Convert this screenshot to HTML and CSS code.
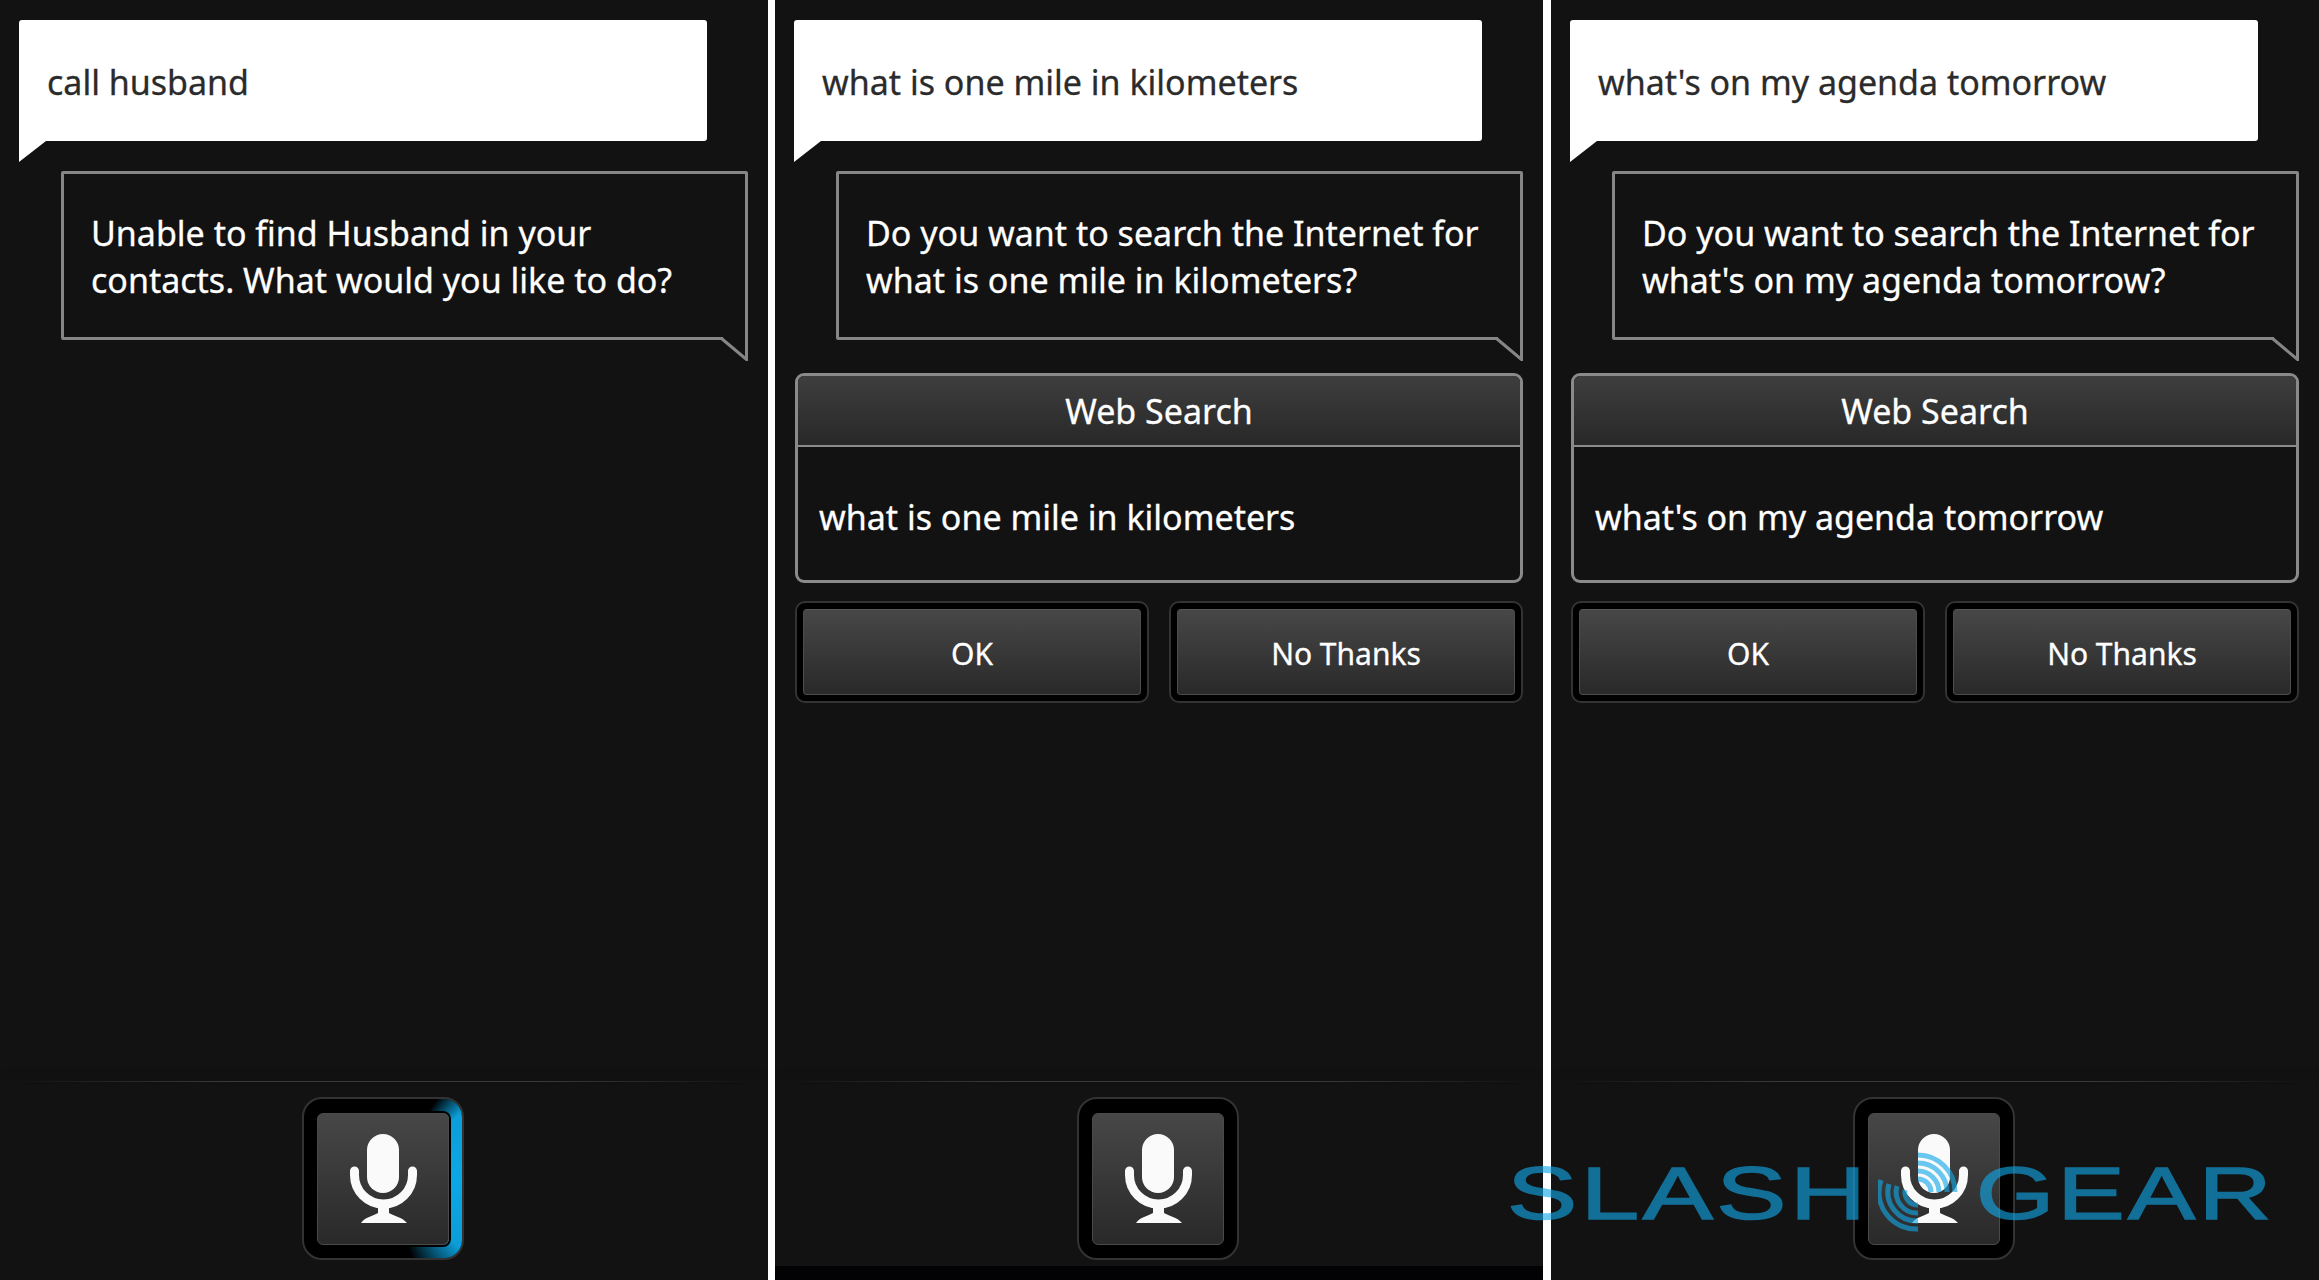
FILE: index.html
```html
<!DOCTYPE html>
<html lang="en">
<head>
<meta charset="utf-8">
<title>Voice assistant</title>
<link rel="stylesheet" href="styles.css">
</head>
<body>
<main class="screens">
  <section class="panel">
    <div class="query"><span>call husband</span></div>
    <div class="reply">
      <p>Unable to find Husband in your<br>contacts. What would you like to do?</p>
      <svg class="reply-tail" viewBox="0 0 30 24"><rect class="tail-gap" x="5" y="0" width="22" height="3"/><path d="M3.5 1.5L28.5 22.5V0"/></svg>
    </div>
    <div class="footer">
      <div class="rule"></div>
      <div class="mic mic-active">
        <div class="mic-face">
          <svg viewBox="0 0 132 132"><rect x="50" y="21" width="32" height="59" rx="16"/><path class="mic-arc" d="M37.5 58V62a29 29 0 0 0 58 0V58"/><path d="M44 110C48 104 56 103 61 100V92H72V100C77 103 85 104 90 110Z"/></svg>
        </div>
      </div>
    </div>
    <div class="bar"></div>
  </section>
  <section class="panel">
    <div class="query"><span>what is one mile in kilometers</span></div>
    <div class="reply">
      <p>Do you want to search the Internet for<br>what is one mile in kilometers?</p>
      <svg class="reply-tail" viewBox="0 0 30 24"><rect class="tail-gap" x="5" y="0" width="22" height="3"/><path d="M3.5 1.5L28.5 22.5V0"/></svg>
    </div>
    <div class="card">
      <div class="card-head">Web Search</div>
      <div class="card-body">what is one mile in kilometers</div>
    </div>
    <div class="actions">
      <div class="btn"><div class="btn-face">OK</div></div>
      <div class="btn"><div class="btn-face">No Thanks</div></div>
    </div>
    <div class="footer">
      <div class="rule"></div>
      <div class="mic">
        <div class="mic-face">
          <svg viewBox="0 0 132 132"><rect x="50" y="21" width="32" height="59" rx="16"/><path class="mic-arc" d="M37.5 58V62a29 29 0 0 0 58 0V58"/><path d="M44 110C48 104 56 103 61 100V92H72V100C77 103 85 104 90 110Z"/></svg>
        </div>
      </div>
    </div>
    <div class="bar bar-dark"></div>
  </section>
  <section class="panel">
    <div class="query"><span>what's on my agenda tomorrow</span></div>
    <div class="reply">
      <p>Do you want to search the Internet for<br>what's on my agenda tomorrow?</p>
      <svg class="reply-tail" viewBox="0 0 30 24"><rect class="tail-gap" x="5" y="0" width="22" height="3"/><path d="M3.5 1.5L28.5 22.5V0"/></svg>
    </div>
    <div class="card">
      <div class="card-head">Web Search</div>
      <div class="card-body">what's on my agenda tomorrow</div>
    </div>
    <div class="actions">
      <div class="btn"><div class="btn-face">OK</div></div>
      <div class="btn"><div class="btn-face">No Thanks</div></div>
    </div>
    <div class="footer">
      <div class="rule"></div>
      <div class="mic">
        <div class="mic-face">
          <svg viewBox="0 0 132 132"><rect x="50" y="21" width="32" height="59" rx="16"/><path class="mic-arc" d="M37.5 58V62a29 29 0 0 0 58 0V58"/><path d="M44 110C48 104 56 103 61 100V92H72V100C77 103 85 104 90 110Z"/></svg>
        </div>
      </div>
    </div>
    <div class="bar"></div>
  </section>
</main>
<div class="watermark">
  <span class="wm-left">SLASH</span>
  <svg class="wm-swirl" viewBox="0 0 80 80">
    <path d="M3 28A37 37 0 0 0 40 77"/>
    <path d="M11 32A29 29 0 0 0 40 69"/>
    <path d="M19 34A21 21 0 0 0 40 61"/>
    <path d="M27 38A13 13 0 0 0 40 53"/>
    <path d="M40 3A37 37 0 0 1 77 40"/>
    <path d="M40 11A29 29 0 0 1 69 40"/>
    <path d="M40 19A21 21 0 0 1 61 40"/>
    <path d="M40 27A13 13 0 0 1 53 40"/>
  </svg>
  <span class="wm-right">GEAR</span>
</div>
</body>
</html>
```

FILE: styles.css
```css
* { box-sizing: border-box; }
html, body { margin: 0; padding: 0; }
body {
  position: relative;
  width: 2319px;
  height: 1280px;
  overflow: hidden;
  background: #fff;
  font-family: "Noto Sans", "Open Sans", sans-serif;
}
.screens {
  display: grid;
  grid-template-columns: 775px 776px 768px;
  height: 1280px;
}
.panel {
  display: flex;
  flex-direction: column;
  width: 768px;
  height: 1280px;
  background: #121212;
  overflow: hidden;
  -webkit-text-stroke: .3px currentColor;
}
.query {
  position: relative;
  flex: none;
  display: flex;
  align-items: center;
  width: 688px;
  height: 121px;
  margin: 20px 0 0 19px;
  padding: 3px 0 0 28px;
  background: #fff;
  border-radius: 3px 3px 3px 0;
  color: #2b2b2b;
  font-size: 34px;
}
.query::after {
  content: "";
  position: absolute;
  left: 0;
  top: 100%;
  width: 27px;
  height: 21px;
  background: #fff;
  clip-path: polygon(0 0, 100% 0, 0 100%);
}
.reply {
  position: relative;
  flex: none;
  width: 687px;
  height: 169px;
  margin: 30px 0 0 61px;
  padding: 0 0 0 27px;
  display: flex;
  align-items: center;
  border: 3px solid #868686;
  border-radius: 2px;
  color: #fff;
  font-size: 34px;
  line-height: 47px;
}
.reply p { margin: 3px 0 0; }
.reply-tail {
  position: absolute;
  right: -3px;
  top: 100%;
  width: 30px;
  height: 24px;
  fill: none;
  stroke: #868686;
  stroke-width: 3;
}
.reply-tail .tail-gap { fill: #121212; stroke: none; }
.card {
  flex: none;
  width: 728px;
  height: 210px;
  margin: 33px 0 0 20px;
  border: 3px solid #8a8a8a;
  border-radius: 9px;
  overflow: hidden;
  color: #fff;
  font-size: 34px;
}
.card-head {
  height: 71px;
  display: flex;
  align-items: center;
  justify-content: center;
  background: linear-gradient(#3e3e3e, #282828);
  border-bottom: 2px solid #8a8a8a;
}
.card-body {
  height: 134px;
  display: flex;
  align-items: center;
  padding: 6px 0 0 21px;
}
.actions {
  flex: none;
  display: flex;
  gap: 20px;
  width: 728px;
  height: 102px;
  margin: 18px 0 0 20px;
}
.btn {
  flex: 1;
  padding: 6px;
  background: #000;
  border: 2px solid #333;
  border-radius: 10px;
}
.btn-face {
  height: 100%;
  display: flex;
  align-items: center;
  justify-content: center;
  padding-top: 2px;
  background: linear-gradient(#474747, #292929);
  border: 1px solid #4c4c4c;
  border-top-color: #555;
  border-radius: 4px;
  color: #fff;
  font-size: 30px;
}
.footer {
  flex: none;
  display: flex;
  flex-direction: column;
  align-items: center;
  margin-top: auto;
  height: 185px;
}
.rule {
  flex: none;
  width: 100%;
  height: 1px;
  margin-bottom: 15px;
  background: linear-gradient(90deg, #121212 2%, #3a3a3a 30%, #3a3a3a 70%, #121212 98%);
  box-shadow: 0 -6px 8px rgba(0, 0, 0, .25);
}
.bar { flex: none; height: 14px; }
.bar-dark { background: #020204; }
.mic {
  position: relative;
  flex: none;
  width: 162px;
  height: 163px;
  margin-right: 2px;
  padding: 14px 13px;
  background: #000;
  border: 2px solid #333;
  border-radius: 20px;
}
.mic-active::before {
  content: "";
  position: absolute;
  inset: 0;
  border-radius: 18px;
  background: conic-gradient(from 0deg, transparent 34deg, #0b9ed9 50deg, #0ba8e6 90deg, #0b9ed9 132deg, transparent 160deg);
}
.mic-face {
  position: relative;
  width: 132px;
  height: 132px;
  background: linear-gradient(#474747, #292929);
  border: 1px solid #4a4a4a;
  border-radius: 6px;
}
.mic-active .mic-face { box-shadow: 0 0 0 2px #000; }
.mic-face svg {
  display: block;
  position: absolute;
  left: -1px;
  top: -1px;
  width: 132px;
  height: 132px;
  fill: #fafafa;
}
.mic-face .mic-arc {
  fill: none;
  stroke: #fafafa;
  stroke-width: 9;
  stroke-linecap: round;
}
.watermark {
  position: absolute;
  left: 1507px;
  top: 1166px;
  width: 765px;
  height: 55px;
  display: flex;
  justify-content: space-between;
  align-items: center;
  color: rgb(18, 169, 233);
  font-family: "Liberation Sans", sans-serif;
  font-size: 74px;
  line-height: 55px;
  letter-spacing: 2.5px;
  -webkit-text-stroke: 1.5px rgb(18, 169, 233);
  opacity: .62;
  filter: blur(.6px);
}
.wm-left { transform: scaleX(1.42); transform-origin: left center; }
.wm-right { transform: scaleX(1.36); transform-origin: right center; margin-right: -2.5px; }
.wm-swirl {
  position: absolute;
  left: 371px;
  top: -14px;
  width: 80px;
  height: 80px;
  fill: none;
  stroke: rgb(18, 169, 233);
  stroke-width: 5;
}
```
